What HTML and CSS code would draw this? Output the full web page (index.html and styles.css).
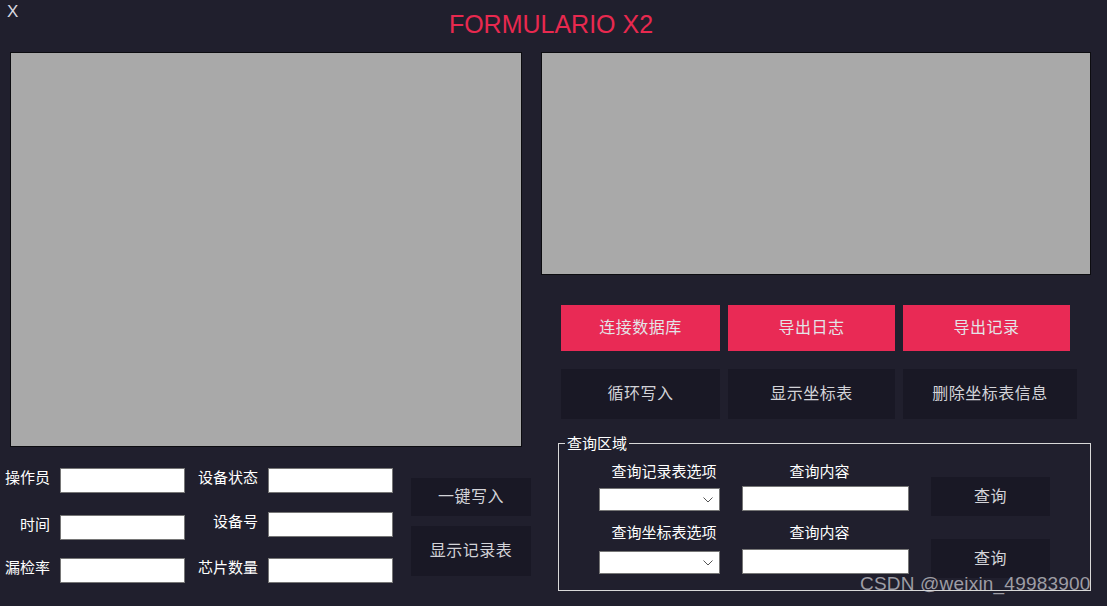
FILE: index.html
```html
<!DOCTYPE html>
<html lang="zh-CN">
<head>
<meta charset="utf-8">
<title>FORMULARIO X2</title>
<link rel="stylesheet" href="styles.css">
</head>
<body>
<div class="app">
  <header class="header">
    <span class="close">X</span>
    <h1 class="title">FORMULARIO X2</h1>
  </header>
  <main class="main">
    <section class="left">
      <div class="panel panel-big"></div>
      <div class="form">
        <div class="fcol fcol-a">
          <div class="frow"><label class="lbl lbl-a">操作员</label><div class="inp"></div></div>
          <div class="frow frow-a2"><label class="lbl lbl-a">时间</label><div class="inp"></div></div>
          <div class="frow frow-a3"><label class="lbl lbl-a">漏检率</label><div class="inp"></div></div>
        </div>
        <div class="fcol fcol-b">
          <div class="frow"><label class="lbl lbl-b">设备状态</label><div class="inp"></div></div>
          <div class="frow frow-b2"><label class="lbl lbl-b">设备号</label><div class="inp"></div></div>
          <div class="frow frow-b3"><label class="lbl lbl-b">芯片数量</label><div class="inp"></div></div>
        </div>
        <div class="fcol fcol-c">
          <button class="btn dark btn-write">一键写入</button>
          <button class="btn dark btn-show">显示记录表</button>
        </div>
      </div>
    </section>
    <section class="right">
      <div class="panel panel-small"></div>
      <div class="btnrow btnrow-red">
        <button class="btn red w159">连接数据库</button>
        <button class="btn red w167">导出日志</button>
        <button class="btn red w167">导出记录</button>
      </div>
      <div class="btnrow btnrow-dark">
        <button class="btn dark w159">循环写入</button>
        <button class="btn dark w167">显示坐标表</button>
        <button class="btn dark w174">删除坐标表信息</button>
      </div>
      <fieldset class="group">
        <legend class="legend">查询区域</legend>
        <div class="qrows">
          <div class="qrow">
            <div class="qcell qcell-sel">
              <span class="qlbl qlbl-sel">查询记录表选项</span>
              <div class="sel"><svg class="chev" width="10" height="6" viewBox="0 0 10 6"><path d="M0.5 0.5 L5 5 L9.5 0.5" fill="none" stroke="#555" stroke-width="1"/></svg></div>
            </div>
            <div class="qcell qcell-inp">
              <span class="qlbl qlbl-inp">查询内容</span>
              <div class="qinp"></div>
            </div>
            <button class="btn dark qbtn">查询</button>
          </div>
          <div class="qrow qrow2">
            <div class="qcell qcell-sel">
              <span class="qlbl qlbl-sel">查询坐标表选项</span>
              <div class="sel"><svg class="chev" width="10" height="6" viewBox="0 0 10 6"><path d="M0.5 0.5 L5 5 L9.5 0.5" fill="none" stroke="#555" stroke-width="1"/></svg></div>
            </div>
            <div class="qcell qcell-inp">
              <span class="qlbl qlbl-inp">查询内容</span>
              <div class="qinp"></div>
            </div>
            <button class="btn dark qbtn">查询</button>
          </div>
        </div>
      </fieldset>
    </section>
  </main>
  <div class="watermark">CSDN @weixin_49983900</div>
</div>
</body>
</html>
```

FILE: styles.css
```css
* { box-sizing: border-box; }
html, body { margin: 0; padding: 0; }
body {
  background: #201f2d;
  width: 1107px;
  height: 606px;
  overflow: hidden;
  font-family: "Noto Sans CJK SC", "Liberation Sans", sans-serif;
  color: #fff;
}
.app { position: relative; width: 1107px; height: 606px; }

.header {
  height: 52px;
  display: flex;
  justify-content: center;
  padding-top: 9px;
  padding-right: 5px;
}
.close {
  position: absolute;
  left: 7px;
  top: 2px;
  font-family: "Liberation Sans", Arial, sans-serif;
  font-size: 17px;
  line-height: 20px;
  color: #d8d8e0;
}
.title {
  margin: 0;
  font-family: "Liberation Sans", Arial, sans-serif;
  font-weight: normal;
  font-size: 25px;
  line-height: 30px;
  color: #e8294f;
}

.main { display: flex; }
.left { width: 522px; }
.right { width: 569px; margin-left: 19px; }

.panel {
  background: #a9a9a9;
  border: 1px solid #0c0c10;
}
.panel-big { margin-left: 10px; width: 512px; height: 395px; }
.panel-small { width: 550px; height: 223px; }

/* left form */
.form { display: flex; margin-top: 21px; }
.fcol { display: flex; flex-direction: column; }
.frow { display: flex; align-items: center; height: 25px; }
.frow-a2 { margin-top: 22px; }
.frow-a3 { margin-top: 18px; }
.frow-b2 { margin-top: 19px; }
.frow-b3 { margin-top: 21px; }
.lbl {
  font-size: 15px;
  line-height: 20px;
  text-align: right;
  color: #fff;
  margin-right: 10px;
  margin-top: -7px;
  white-space: nowrap;
}
.lbl-a { width: 50px; }
.lbl-b { width: 60px; }
.fcol-b { margin-left: 13px; }
.inp {
  width: 125px;
  height: 25px;
  background: #fff;
  border: 1px solid #767676;
}
.fcol-c { margin-left: 18px; padding-top: 10px; }

.btn {
  border: none;
  padding: 0 0 4px 0;
  margin: 0;
  font-family: "Noto Sans CJK SC", "Liberation Sans", sans-serif;
  font-size: 16px;
  line-height: 20px;
  letter-spacing: 0.5px;
  cursor: pointer;
  display: flex;
  align-items: center;
  justify-content: center;
}
.btn.red { background: #e92a55; color: #e4e4e8; }
.btn.dark { background: #191825; color: #d3d3d8; }
.btn-write { width: 120px; height: 38px; }
.btn-show { width: 120px; height: 50px; margin-top: 10px; }

.btnrow { display: flex; gap: 8px; padding-left: 20px; }
.btnrow-red { margin-top: 30px; }
.btnrow-red .btn { height: 46px; }
.btnrow-dark { margin-top: 18px; }
.btnrow-dark .btn { height: 50px; }
.w159 { width: 159px; }
.w167 { width: 167px; }
.w174 { width: 174px; }

/* query group */
.group {
  margin: 14px 0 0 17px;
  width: 533px;
  height: 158px;
  padding: 0;
  border: 1px solid #d8d8d8;
}
.legend {
  margin-left: 6px;
  padding: 0 2px;
  font-size: 15px;
  line-height: 20px;
  color: #fff;
}
.qrows { padding: 8px 0 0 40px; }
.qrow { display: flex; align-items: flex-start; }
.qrow2 { margin-top: 6px; }
.qcell { display: flex; flex-direction: column; align-items: center; }
.qlbl {
  font-size: 15px;
  line-height: 20px;
  color: #fff;
  white-space: nowrap;
}
.qlbl-sel { margin-left: 9px; }
.qlbl-inp { margin-right: 12px; }
.qcell-sel { width: 121px; }
.qcell-inp { width: 167px; margin-left: 22px; }
.sel {
  width: 121px;
  height: 23px;
  margin-top: 7px;
  background: #fff;
  border: 1px solid #767676;
  display: flex;
  align-items: center;
  justify-content: flex-end;
  padding-right: 6px;
}
.qrow2 .sel { margin-top: 9px; }
.qinp {
  width: 167px;
  height: 25px;
  margin-top: 5px;
  background: #fff;
  border: 1px solid #767676;
}
.qrow2 .qinp { margin-top: 7px; }
.qbtn { width: 119px; height: 39px; margin-left: 22px; margin-top: 16px; }
.qrow2 .qbtn { margin-top: 17px; }

.watermark {
  position: absolute;
  left: 860px;
  top: 573px;
  font-family: "Liberation Sans", Arial, sans-serif;
  font-size: 19px;
  line-height: 22px;
  letter-spacing: 0.2px;
  color: rgba(200, 200, 205, 0.75);
  white-space: nowrap;
}
```
